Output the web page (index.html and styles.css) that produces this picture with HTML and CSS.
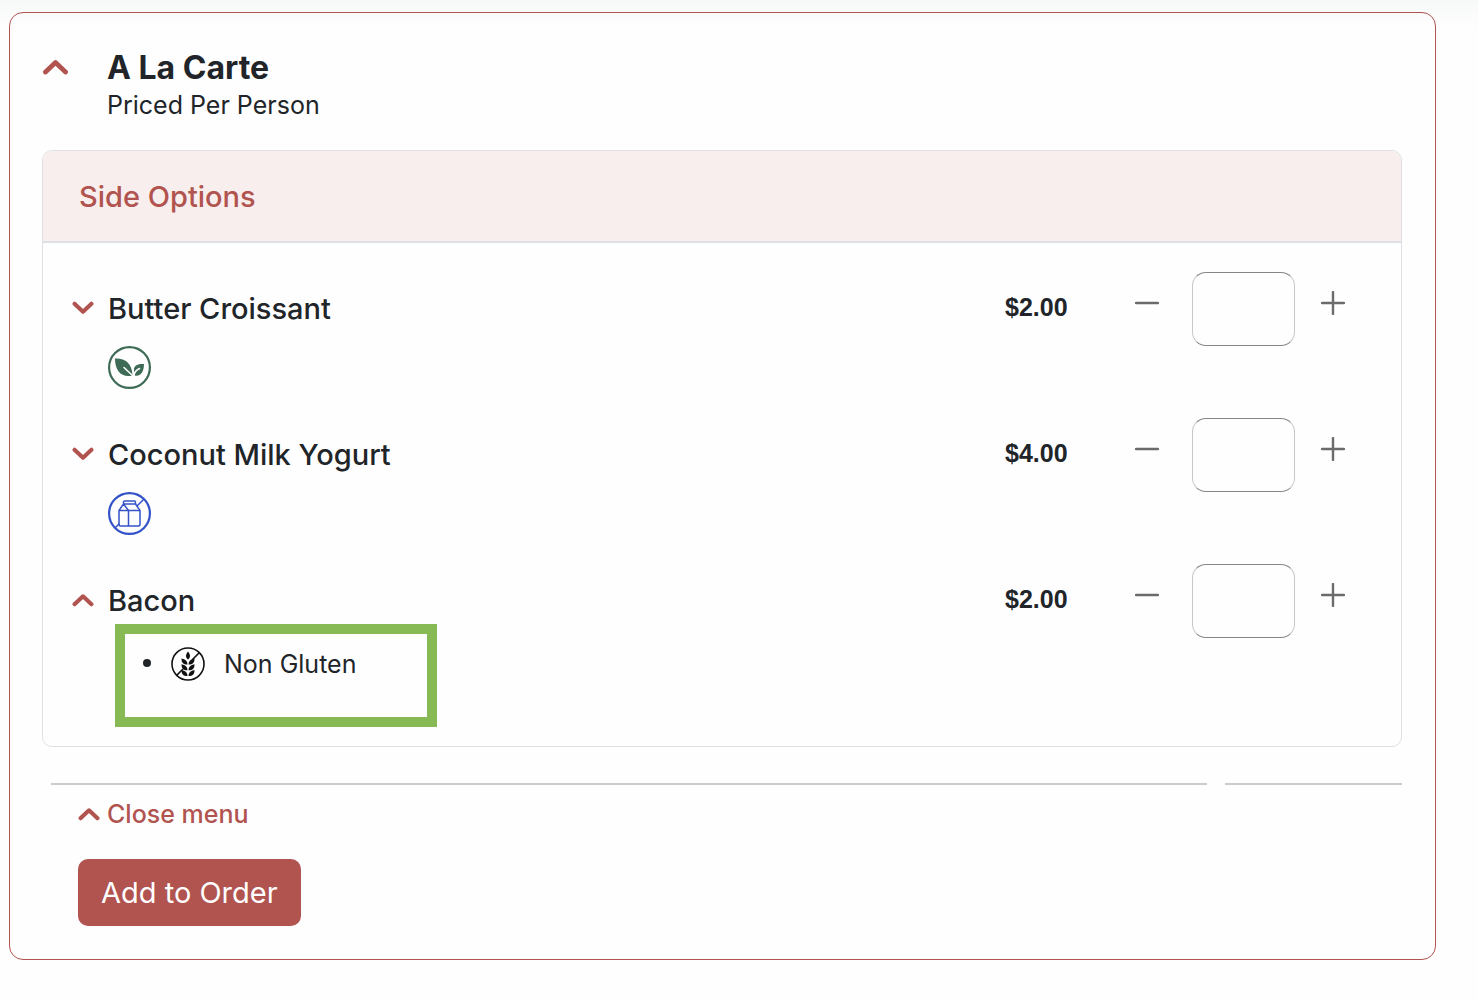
FILE: index.html
```html
<!DOCTYPE html>
<html lang="en">
<head>
<meta charset="utf-8">
<meta name="viewport" content="width=device-width, initial-scale=1">
<title>A La Carte</title>
<link rel="stylesheet" href="styles.css">
</head>
<body>
<svg class="sprite" aria-hidden="true">
  <symbol id="chevron-up" viewBox="0 0 26 16"><path d="M3 13L13 3.600L23 13" fill="none" stroke="currentColor" stroke-width="4.800" stroke-linecap="round" stroke-linejoin="round"/></symbol>
  <symbol id="chevron-down" viewBox="0 0 26 16"><path d="M3 3L13 12.400L23 3" fill="none" stroke="currentColor" stroke-width="4.800" stroke-linecap="round" stroke-linejoin="round"/></symbol>
  <symbol id="minus" viewBox="0 0 24 24"><path d="M1 12H23" stroke="currentColor" stroke-width="2.400" stroke-linecap="round"/></symbol>
  <symbol id="plus" viewBox="0 0 24 24"><path d="M1 12H23M12 1V23" stroke="currentColor" stroke-width="2.400" stroke-linecap="round"/></symbol>
</svg>
<main class="menu-card">
  <header class="menu-head">
    <button class="toggle" type="button" aria-label="Collapse A La Carte" aria-expanded="true"><svg class="chevron-lg"><use href="#chevron-up"/></svg></button>
    <div>
      <h1 class="menu-title">A La Carte</h1>
      <p class="menu-note">Priced Per Person</p>
    </div>
  </header>

  <section class="panel">
    <h2 class="panel-title">Side Options</h2>
    <div class="items">
      <article class="item">
        <button class="toggle item-toggle" type="button" aria-label="Show Butter Croissant details" aria-expanded="false"><svg class="chevron"><use href="#chevron-down"/></svg></button>
        <div class="item-info">
          <h3 class="item-name">Butter Croissant</h3>
          <svg class="diet-icon vegan" viewBox="0 0 43 43" role="img" aria-label="Vegetarian">
            <circle cx="21.500" cy="21.500" r="20.400" fill="none" stroke="currentColor" stroke-width="2.200"/>
            <path d="M7 12.500C17 12 24 17 24.500 29.500C14 32 7 25.500 7 12.500Z" fill="currentColor"/>
            <path d="M36 18C29 17.500 25.500 20 26 24.500L26.500 29.500C33 31 36 25 36 18Z" fill="currentColor"/>
            <path d="M16 21.500L25.500 30.500M26 30C26.200 26.500 28 24 31.500 22.500" fill="none" stroke="#fefefe" stroke-width="1.600" stroke-linecap="round"/>
          </svg>
        </div>
        <span class="price">$2.00</span>
        <div class="stepper">
          <button class="step" type="button" aria-label="Remove one Butter Croissant"><svg><use href="#minus"/></svg></button>
          <input class="qty" type="text" inputmode="numeric" aria-label="Butter Croissant quantity">
          <button class="step" type="button" aria-label="Add one Butter Croissant"><svg><use href="#plus"/></svg></button>
        </div>
      </article>

      <article class="item">
        <button class="toggle item-toggle" type="button" aria-label="Show Coconut Milk Yogurt details" aria-expanded="false"><svg class="chevron"><use href="#chevron-down"/></svg></button>
        <div class="item-info">
          <h3 class="item-name">Coconut Milk Yogurt</h3>
          <svg class="diet-icon dairy" viewBox="0 0 43 43" role="img" aria-label="Non Dairy">
            <g fill="none" stroke="currentColor" stroke-linejoin="round">
              <circle cx="21.500" cy="21.500" r="20.400" stroke-width="2.200"/>
              <path d="M36 7L29 14M7 36L11.500 31.500" stroke-width="1.500"/>
              <path d="M11 18.500V32.500Q11 34 12.500 34H30.500Q32 34 32 32.500V18.500Z" stroke-width="1.500"/>
              <path d="M11 18.500L15.500 12H27.500L32 18.500M15.500 12L20.500 18.500V34M15.500 12V10Q15.500 9 16.500 9H26.500Q27.500 9 27.500 10V12" stroke-width="1.500"/>
            </g>
          </svg>
        </div>
        <span class="price">$4.00</span>
        <div class="stepper">
          <button class="step" type="button" aria-label="Remove one Coconut Milk Yogurt"><svg><use href="#minus"/></svg></button>
          <input class="qty" type="text" inputmode="numeric" aria-label="Coconut Milk Yogurt quantity">
          <button class="step" type="button" aria-label="Add one Coconut Milk Yogurt"><svg><use href="#plus"/></svg></button>
        </div>
      </article>

      <article class="item">
        <button class="toggle item-toggle" type="button" aria-label="Hide Bacon details" aria-expanded="true"><svg class="chevron"><use href="#chevron-up"/></svg></button>
        <div class="item-info">
          <h3 class="item-name">Bacon</h3>
          <ul class="diet-list">
            <li class="diet-entry">
              <svg class="gluten" viewBox="0 0 34 34" aria-hidden="true">
                <circle cx="17" cy="17" r="16" fill="none" stroke="currentColor" stroke-width="1.600"/>
                <path d="M28.500 5.500L21 13M5.500 28.500L12 22" stroke="currentColor" stroke-width="1.600"/>
                <g fill="currentColor">
                  <path d="M17 4.500C19.800 8 19.500 10.500 17 12.500C14.500 10.500 14.200 8 17 4.500Z"/>
                  <path d="M16.500 17.500C12 17.500 10.500 15.500 10.500 11.500C14.500 12 16.500 14 16.500 17.500Z"/>
                  <path d="M17.500 17.500C22 17.500 23.500 15.500 23.500 11.500C19.500 12 17.500 14 17.500 17.500Z"/>
                  <path d="M16.500 23.200C12 23.200 10.500 21.200 10.500 17.200C14.500 17.700 16.500 19.700 16.500 23.200Z"/>
                  <path d="M17.500 23.200C22 23.200 23.500 21.200 23.500 17.200C19.500 17.700 17.500 19.700 17.500 23.200Z"/>
                  <path d="M16.500 29C12 29 10.500 27 10.500 23C14.500 23.500 16.500 25.500 16.500 29Z"/>
                  <path d="M17.500 29C22 29 23.500 27 23.500 23C19.500 23.500 17.500 25.500 17.500 29Z"/>
                </g>
              </svg>
              <span>Non Gluten</span>
            </li>
          </ul>
        </div>
        <span class="price">$2.00</span>
        <div class="stepper">
          <button class="step" type="button" aria-label="Remove one Bacon"><svg><use href="#minus"/></svg></button>
          <input class="qty" type="text" inputmode="numeric" aria-label="Bacon quantity">
          <button class="step" type="button" aria-label="Add one Bacon"><svg><use href="#plus"/></svg></button>
        </div>
      </article>
    </div>
  </section>

  <div class="rules"><hr class="rule rule-main"><hr class="rule rule-side"></div>
  <footer class="actions">
    <button class="close-menu" type="button"><svg class="chevron"><use href="#chevron-up"/></svg>Close menu</button>
    <button class="add" type="button">Add to Order</button>
  </footer>
</main>
</body>
</html>
```
FILE: styles.css
```css
:root {
  --red: #b1534f;
  --ink: #212529;
  --line: #dee0e5;
}

* { box-sizing: border-box; }

body {
  margin: 0;
  padding: 12px 42px 40px 9px;
  background: #fefefe linear-gradient(#f7f9f8, #fefefe) top / 100% 30px no-repeat;
  color: var(--ink);
  font-family: Inter, "Liberation Sans", sans-serif;
  font-size: 25px;
  line-height: 32px;
}

h1, h2, h3, p, ul, hr { margin: 0; }

button {
  padding: 0;
  border: 0;
  background: none;
  color: inherit;
  font: inherit;
  cursor: pointer;
}

svg { display: block; }
.sprite { position: absolute; width: 0; height: 0; }

.menu-card {
  padding: 34px 33px 33px 32px;
  border: 1px solid var(--red);
  border-radius: 14px;
}

.menu-head {
  display: flex;
  align-items: flex-start;
  gap: 38px;
  padding-bottom: 29px;
}

.toggle { color: var(--red); }
.menu-head .toggle { padding: 12px 0; }
.chevron-lg { width: 27px; height: 16px; }
.chevron { width: 22px; height: 14px; }

.menu-title {
  font-size: 32px;
  font-weight: 700;
  line-height: 42px;
}

.panel {
  border: 1px solid var(--line);
  border-radius: 10px;
  overflow: hidden;
}

.panel-title {
  padding: 26px 36px 24px;
  border-bottom: 2px solid var(--line);
  background: #f8eeed;
  color: var(--red);
  font-size: 29px;
  font-weight: 500;
  line-height: 40px;
}

.items {
  display: grid;
  gap: 28px;
  padding: 29px 46px 19px 29px;
}

.item {
  display: flex;
  align-items: flex-start;
}

.item-toggle { padding: 29px 0; }

.item-info {
  flex: 1;
  padding: 19px 0 0 14px;
}

.item-name {
  font-size: 29px;
  font-weight: 500;
  line-height: 36px;
}

.diet-icon { width: 43px; height: 43px; margin: 19px 0 1px; }
.vegan { color: #3d6b56; }
.dairy { color: #3453c8; }

.diet-list {
  width: 322px;
  height: 103px;
  margin: 5px 0 0 7px;
  padding: 12px 0 0 41px;
  border: 10px solid #87b955;
}

.diet-entry > * { display: inline-block; vertical-align: middle; }
.gluten { width: 34px; height: 34px; margin: 0 12px 0 5px; color: #111; }

.price {
  width: 120px;
  font: bold 25px/70px "Liberation Sans", Arial, sans-serif;
}

.stepper {
  display: flex;
  align-items: flex-start;
}

.step {
  display: grid;
  place-items: center;
  width: 44px;
  height: 62px;
  color: #6b6b6b;
}
.step svg { width: 24px; height: 24px; }

.qty {
  width: 103px;
  height: 74px;
  margin: 0 16px 0 23px;
  padding: 0 12px;
  border: 1px solid #c8c8c8;
  border-block-color: #86868a;
  border-radius: 14px;
  background: none;
  color: inherit;
  font: inherit;
}

.rules {
  display: flex;
  gap: 18px;
  padding: 36px 0 0 9px;
}

.rule {
  height: 2px;
  border: 0;
  background: #ccc;
}
.rule-main { flex: 1156; }
.rule-side { flex: 177; }

.actions {
  display: flex;
  flex-direction: column;
  align-items: flex-start;
  gap: 29px;
  padding: 13px 36px 0;
}

.close-menu {
  display: flex;
  align-items: center;
  gap: 7px;
  color: var(--red);
  font-weight: 500;
}

.add {
  padding: 14px 23px 13px;
  border-radius: 10px;
  background: var(--red);
  color: #fff;
  font-size: 29px;
  line-height: 40px;
}
```
